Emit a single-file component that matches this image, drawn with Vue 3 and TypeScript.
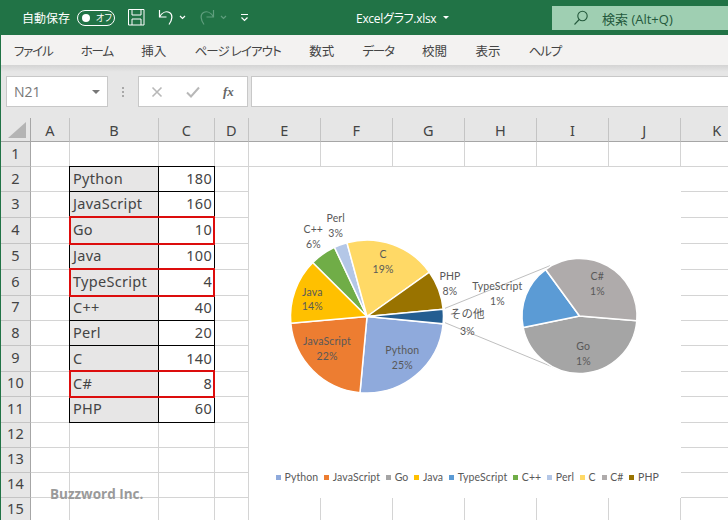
<script setup lang="ts">
interface Slice {
  name: string
  value: number
  color: string
}

const menus = [
  { label: 'ファイル', kind: 'kana' },
  { label: 'ホーム', kind: 'kana' },
  { label: '挿入', kind: 'kanji' },
  { label: 'ページ レイアウト', kind: 'long' },
  { label: '数式', kind: 'kanji' },
  { label: 'データ', kind: 'kana' },
  { label: '校閲', kind: 'kanji' },
  { label: '表示', kind: 'kanji' },
  { label: 'ヘルプ', kind: 'kana' },
]
const columns = ['A', 'B', 'C', 'D', 'E', 'F', 'G', 'H', 'I', 'J', 'K']
const rows = Array.from({ length: 15 }, (_, i) => i + 1)

const legend: Slice[] = [
  { name: 'Python', value: 180, color: '#8faadc' },
  { name: 'JavaScript', value: 160, color: '#ed7d31' },
  { name: 'Go', value: 10, color: '#a5a5a5' },
  { name: 'Java', value: 100, color: '#ffc000' },
  { name: 'TypeScript', value: 4, color: '#5b9bd5' },
  { name: 'C++', value: 40, color: '#70ad47' },
  { name: 'Perl', value: 20, color: '#b4c7e7' },
  { name: 'C', value: 140, color: '#ffd966' },
  { name: 'C#', value: 8, color: '#afabab' },
  { name: 'PHP', value: 60, color: '#997300' },
]

const flagged = ['Go', 'TypeScript', 'C#']

function cellText(col: string, row: number): string {
  const item = legend[row - 2]
  if (!item) return ''
  if (col === 'B') return item.name
  if (col === 'C') return String(item.value)
  return ''
}

function inTable(col: string, row: number) {
  return (col === 'B' || col === 'C') && row >= 2 && row <= 11
}

function point(cx: number, cy: number, r: number, deg: number) {
  const a = (deg * Math.PI) / 180
  return `${(cx + r * Math.sin(a)).toFixed(2)} ${(cy - r * Math.cos(a)).toFixed(2)}`
}

function wedge(cx: number, cy: number, r: number, from: number, to: number) {
  const large = to - from > 180 ? 1 : 0
  return `M${cx} ${cy}L${point(cx, cy, r, from)}A${r} ${r} 0 ${large} 1 ${point(cx, cy, r, to)}Z`
}

function byName(name: string) {
  return legend.find((s) => s.name === name) as Slice
}

function buildPie(items: Slice[], start: number, cx: number, cy: number, r: number) {
  const total = items.reduce((sum, s) => sum + s.value, 0)
  let angle = start
  return items.map((s) => {
    const sweep = (s.value / total) * 360
    const d = wedge(cx, cy, r, angle, angle + sweep)
    angle += sweep
    return { d, color: s.color, name: s.name }
  })
}

const mainPie = buildPie(
  [
    byName('Python'),
    byName('JavaScript'),
    byName('Java'),
    byName('C++'),
    byName('Perl'),
    byName('C'),
    byName('PHP'),
    { name: 'その他', value: 22, color: '#255e91' },
  ],
  95.5,
  367,
  316.5,
  76.5,
)

const subPie = buildPie([byName('Go'), byName('TypeScript'), byName('C#')], 94.8, 579.5, 316, 57.5)

const labels = [
  { x: 335.7, y: 218, lines: ['Perl', '3%'] },
  { x: 313.3, y: 229, lines: ['C++', '6%'] },
  { x: 383, y: 254, lines: ['C', '19%'] },
  { x: 450, y: 276, lines: ['PHP', '8%'] },
  { x: 312.3, y: 291.5, lines: ['Java', '14%'] },
  { x: 327, y: 341.3, lines: ['JavaScript', '22%'] },
  { x: 402.3, y: 350.3, lines: ['Python', '25%'] },
  { x: 497.3, y: 286.3, lines: ['TypeScript', '1%'] },
  { x: 597.3, y: 276, lines: ['C#', '1%'] },
  { x: 583.3, y: 346.3, lines: ['Go', '1%'] },
]
</script>

<template>
  <div class="app">
    <header class="titlebar">
      <span class="autosave">自動保存</span>
      <span class="toggle"><i class="dot"></i><span class="off">オフ</span></span>
      <svg class="qa save" width="17" height="17" viewBox="0 0 17 17" fill="none" stroke="#fff" stroke-width="1">
        <path d="M.5.5h15.5v15.5H.5zM4 .5v5.5h9V.5M4 16V10h9v6" />
      </svg>
      <svg class="qa undo" width="16" height="17" viewBox="0 0 16 17" fill="none" stroke="#fff" stroke-width="1.2">
        <path d="M1.500 1v7h7M1.500 8C4 3.500 8 1.800 11.500 3.500c3.500 2 3 7-.5 12" />
      </svg>
      <svg class="chev" width="7" height="5" viewBox="0 0 7 5" fill="none" stroke="#fff" stroke-width="1.200"><path d="M1 1l2.500 2.500L6 1" /></svg>
      <svg class="qa redo" width="16" height="17" viewBox="0 0 16 17" fill="none" stroke="#5f9e7d" stroke-width="1.200">
        <path d="M14.500 1v7h-7M14.500 8C12 3.500 8 1.800 4.500 3.500c-3.500 2-3 7 .5 12" />
      </svg>
      <svg class="chev redo-chev" width="7" height="5" viewBox="0 0 7 5" fill="none" stroke="#5f9e7d" stroke-width="1.200"><path d="M1 1l2.500 2.500L6 1" /></svg>
      <svg class="custom" width="9" height="9" viewBox="0 0 9 9" fill="none" stroke="#fff" stroke-width="1.200"><path d="M1 1.500h7M1.500 4.500L4.500 7.500 7.500 4.500" /></svg>
      <span class="filename">Excelグラフ.xlsx</span>
      <i class="caret"></i>
      <div class="search">
        <svg width="18" height="18" viewBox="0 0 18 18" fill="none" stroke="#24593c" stroke-width="1.100">
          <circle cx="10.500" cy="7" r="4.700" /><path d="M7.200 10.500L2.500 15.500" />
        </svg>
        <span>検索 (Alt+Q)</span>
      </div>
    </header>

    <nav class="menu">
      <span v-for="m in menus" :key="m.label" class="menu-item" :class="m.kind">{{ m.label }}</span>
    </nav>

    <section class="formula">
      <div class="namebox">
        <span>N21</span>
        <i class="namecaret"></i>
      </div>
      <div class="dots"><i></i><i></i><i></i></div>
      <div class="buttons">
        <svg width="12" height="12" viewBox="0 0 12 12" stroke="#b8b8b8" stroke-width="1.600" fill="none"><path d="M1.500 1.500l9 9M10.500 1.500l-9 9" /></svg>
        <svg width="14" height="12" viewBox="0 0 14 12" stroke="#b8b8b8" stroke-width="2" fill="none"><path d="M1 6.500l4 4 8-9" /></svg>
        <span class="fx">fx</span>
      </div>
      <div class="input"></div>
    </section>

    <section class="sheet">
      <div class="corner"><i></i></div>
      <div v-for="c in columns" :key="c" class="colhead">{{ c }}</div>
      <template v-for="r in rows" :key="r">
        <div class="rowhead" :style="{ gridRow: r + 1, gridColumn: 1 }">{{ r }}</div>
        <div
          v-for="(c, i) in columns"
          :key="c"
          class="cell"
          :class="{ table: inTable(c, r), name: c === 'B' && inTable(c, r), num: c === 'C' }"
          :style="{ gridRow: r + 1, gridColumn: i + 2 }"
        >{{ cellText(c, r) }}</div>
      </template>

      <div
        v-for="f in flagged"
        :key="f"
        class="flag"
        :style="{ gridRow: legend.findIndex((s) => s.name === f) + 3 }"
      ></div>

      <div class="chart">
        <svg class="plot" width="432" height="299" viewBox="249 167 432 299">
          <path d="M445 308.300L550 265.700M445 322.700L560 370" stroke="#bfbfbf" stroke-width="1" fill="none" />
          <path v-for="s in mainPie" :key="s.name" :d="s.d" :fill="s.color" stroke="#fff" stroke-width="1.500" />
          <path v-for="s in subPie" :key="s.name" :d="s.d" :fill="s.color" stroke="#fff" stroke-width="1.500" />
          <g class="labels">
            <text v-for="l in labels" :key="l.lines[0]" :x="l.x" :y="l.y">
              <tspan :x="l.x">{{ l.lines[0] }}</tspan>
              <tspan :x="l.x" dy="14.700">{{ l.lines[1] }}</tspan>
            </text>
            <text x="467.300" y="312.700" class="other">その他</text>
            <text x="467.300" y="330.700">3%</text>
          </g>
        </svg>
        <ul class="legend">
          <li v-for="s in legend" :key="s.name"><i :style="{ background: s.color }"></i>{{ s.name }}</li>
        </ul>
      </div>

      <span class="mark">Buzzword Inc.</span>
    </section>
  </div>
</template>

<style>
html,
body {
  margin: 0;
  background: #fff;
}
</style>

<style scoped>
.app {
  width: 728px;
  height: 520px;
  box-sizing: border-box;
  border-left: 1px solid #217346;
  overflow: hidden;
  font-family: "Open Sans", "Noto Sans CJK JP", sans-serif;
  color: #444;
}

.titlebar {
  position: relative;
  display: flex;
  align-items: center;
  height: 35px;
  margin-left: -1px;
  background: #217346;
  color: #fff;
  font-size: 12px;
  font-feature-settings: "palt";
}

.autosave {
  margin-left: 22px;
  font-family: "Noto Sans CJK JP", sans-serif;
}

.toggle {
  display: flex;
  align-items: center;
  box-sizing: border-box;
  width: 38px;
  height: 16px;
  margin-left: 7px;
  padding-left: 4px;
  border: 1px solid #fff;
  border-radius: 8px;
}

.dot {
  width: 8px;
  height: 8px;
  border-radius: 50%;
  background: #fff;
}

.off {
  margin-left: 6px;
  font-size: 9px;
  font-family: "Noto Sans CJK JP", sans-serif;
}

.save {
  margin-left: 13px;
}

.undo {
  margin-left: 13px;
}

.chev {
  margin-left: 5px;
}

.redo {
  margin-left: 13px;
}

.redo-chev {
  margin-left: 5px;
}

.custom {
  margin-left: 13px;
}

.filename {
  margin-left: 107px;
  font-size: 12px;
  letter-spacing: -0.300px;
}

.caret {
  margin-left: 7px;
  border-top: 3px solid #fff;
  border-left: 3px solid transparent;
  border-right: 3px solid transparent;
}

.search {
  display: flex;
  align-items: center;
  gap: 12px;
  box-sizing: border-box;
  width: 176px;
  height: 24px;
  margin-left: auto;
  margin-top: 1px;
  padding-left: 20px;
  background: #9fcfb2;
  color: #24593c;
  font-size: 13px;
}

.menu {
  display: flex;
  align-items: center;
  gap: 28.300px;
  height: 30px;
  padding-left: 13px;
  background: #f3f2f1;
  font-size: 12.500px;
  font-family: "Noto Sans CJK JP", sans-serif;
  font-feature-settings: "palt";
  color: #444;
}

.menu-item.kana {
  letter-spacing: -1.200px;
}

.menu-item.long {
  letter-spacing: -0.900px;
}

.formula {
  display: flex;
  align-items: center;
  height: 53px;
  box-sizing: border-box;
  padding: 11px 0 11px 5px;
  background: linear-gradient(#d4d4d4, #e6e6e6 7px);
}

.namebox {
  display: flex;
  align-items: center;
  justify-content: space-between;
  box-sizing: border-box;
  width: 102px;
  height: 31px;
  padding: 0 7px;
  background: #fff;
  border: 1px solid #c8c8c8;
  color: #777;
  font-size: 14px;
}

.namecaret {
  border-top: 4px solid #777;
  border-left: 4px solid transparent;
  border-right: 4px solid transparent;
}

.dots {
  display: flex;
  flex-direction: column;
  gap: 2px;
  margin: 0 14px;
}

.dots i {
  width: 2px;
  height: 2px;
  background: #a8a8a8;
}

.buttons {
  display: flex;
  align-items: center;
  box-sizing: border-box;
  width: 110px;
  height: 31px;
  padding-left: 12px;
  gap: 23px;
  background: #fff;
  border: 1px solid #c8c8c8;
}

.fx {
  font: italic bold 13px "Liberation Serif", serif;
  color: #666;
}

.input {
  flex: 1;
  height: 31px;
  box-sizing: border-box;
  margin-left: 3px;
  background: #fff;
  border: 1px solid #c8c8c8;
  border-right: 0;
}

.sheet {
  position: relative;
  display: grid;
  grid-template-columns: 30px 39px 89px 56px 34px 72px 72px 72px 72px 72px 72px 73px;
  grid-template-rows: 24px 25px 25px 25.600px 26px 26px 26px 25.400px 25.400px 25.400px 25.400px 25.400px 25px 25px 25px 25px;
  font-size: 14.500px;
  font-family: "Noto Sans", "Noto Sans CJK JP", sans-serif;
  letter-spacing: 0.300px;
  color: #444;
}

.corner,
.colhead {
  background: #e6e6e6;
  border-bottom: 1.500px solid #a6a6a6;
  border-right: 1px solid #c4c4c4;
  box-sizing: border-box;
}

.corner {
  position: relative;
  border-right-color: #a6a6a6;
}

.corner i {
  position: absolute;
  right: 4px;
  bottom: 3.500px;
  border-left: 18px solid transparent;
  border-bottom: 16px solid #b4b4b4;
}

.colhead,
.rowhead {
  display: flex;
  align-items: center;
  justify-content: center;
}

.rowhead {
  box-sizing: border-box;
  padding-bottom: 3px;
  background: #e6e6e6;
  border-right: 1.500px solid #a6a6a6;
  border-bottom: 1px solid #c4c4c4;
}

.cell {
  box-sizing: border-box;
  display: flex;
  align-items: center;
  padding: 0 2px 2px 3px;
  border-right: 1px solid #d4d4d4;
  border-bottom: 1px solid #d4d4d4;
  white-space: nowrap;
}

.cell.table {
  position: relative;
  z-index: 1;
  border-right-color: #000;
  border-bottom-color: #000;
  box-shadow: -1px 0 0 #000, 0 -1px 0 #000, -1px -1px 0 #000;
}

.cell.name {
  background: #e7e6e6;
}

.cell.num {
  justify-content: flex-end;
}

.flag {
  grid-column: 3 / 5;
  z-index: 3;
  margin: -2px 0 -1px -1px;
  border: 2px solid #dc0d0d;
}

.chart {
  grid-column: 6 / 12;
  grid-row: 3 / 16;
  z-index: 2;
  display: flex;
  flex-direction: column;
  background: #fff;
}

.plot {
  display: block;
  flex: none;
}

.labels text {
  font-family: Lato, "Noto Sans CJK JP", sans-serif;
  font-size: 10.500px;
  fill: #595959;
  text-anchor: middle;
  dominant-baseline: central;
  letter-spacing: 0.150px;
}

.labels .other {
  font-family: "Noto Sans CJK JP", sans-serif;
  font-size: 11.500px;
}

.legend {
  display: flex;
  justify-content: flex-start;
  gap: 6px;
  margin: 0;
  padding: 0 0 0 27px;
  height: 22px;
  align-items: center;
  list-style: none;
  font-family: Lato, sans-serif;
  font-size: 10.500px;
  letter-spacing: 0.100px;
  color: #595959;
}

.legend li {
  display: flex;
  align-items: center;
  gap: 3.500px;
}

.legend i {
  width: 5px;
  height: 5px;
}

.mark {
  position: absolute;
  left: 49px;
  top: 367px;
  z-index: 4;
  font: bold 13.500px "Open Sans", sans-serif;
  letter-spacing: 0;
  color: #9a9a9a;
}
</style>
